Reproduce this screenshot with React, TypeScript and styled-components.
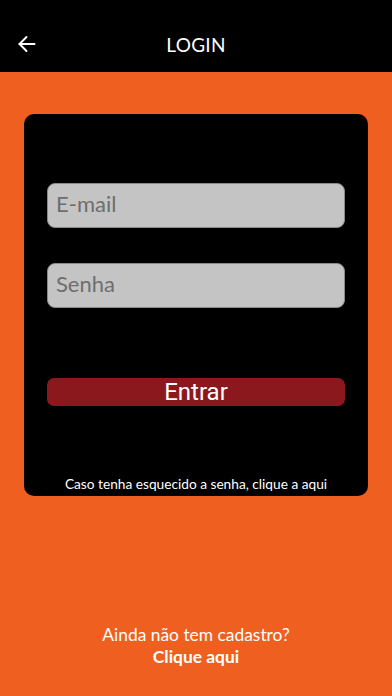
import React from 'react';
import styled, { createGlobalStyle } from 'styled-components';

const GlobalStyle = createGlobalStyle`
  html, body {
    margin: 0;
    padding: 0;
    background: #ef5f1f;
  }
  * {
    box-sizing: border-box;
  }
`;

const Page = styled.div`
  width: 392px;
  height: 696px;
  display: flex;
  flex-direction: column;
  background: #ef5f1f;
  font-family: Lato, 'Noto Sans', sans-serif;
`;

const Header = styled.header`
  height: 72px;
  background: #000;
  display: grid;
  grid-template-columns: 56px 1fr 56px;
  align-items: center;
  padding-top: 16px;
`;

const BackButton = styled.button`
  background: none;
  border: none;
  padding: 0 0 0 17px;
  display: flex;
  align-items: center;
  color: #fff;
  cursor: pointer;
`;

const Title = styled.h1`
  margin: 0;
  text-align: center;
  color: #fff;
  font-size: 19px;
  font-weight: 400;
  letter-spacing: 0.3px;
`;

const Card = styled.div`
  margin: 42px 24px 0;
  height: 382px;
  background: #000;
  border-radius: 10px;
  display: flex;
  flex-direction: column;
  padding: 69px 23px 0;
`;

const Input = styled.input`
  height: 45px;
  width: 100%;
  border: 1px solid #8a8a8a;
  border-radius: 8px;
  background: #c4c4c4;
  padding: 0 8px 5px;
  font-family: Lato, 'Noto Sans', sans-serif;
  font-size: 22px;
  color: #333;
  &::placeholder {
    color: #6e6e6e;
  }
  & + & {
    margin-top: 35px;
  }
`;

const SubmitButton = styled.button`
  margin-top: 70px;
  height: 28px;
  width: 100%;
  border: none;
  border-radius: 7px;
  background: #8b181c;
  color: #fff;
  font-family: Roboto, 'Noto Sans', sans-serif;
  font-size: 24px;
  line-height: 28px;
  padding: 0;
  cursor: pointer;
`;

const ForgotLink = styled.a`
  margin-top: auto;
  margin-bottom: 4px;
  text-align: center;
  color: #fff;
  font-size: 13.7px;
`;

const Footer = styled.div`
  margin-top: auto;
  padding-bottom: 28px;
  display: flex;
  flex-direction: column;
  align-items: center;
  color: #fff;
  font-size: 17.4px;
  line-height: 22px;
`;

const SignupLink = styled.a`
  font-weight: 700;
`;

const BackIcon = () => (
  <svg width="20" height="20" viewBox="0 0 20 20" fill="none" stroke="#fff" strokeWidth="2" strokeLinecap="round" strokeLinejoin="round">
    <path d="M17.5 10H2.5" />
    <path d="M9.5 3L2.5 10l7 7" />
  </svg>
);

const App = () => {
  return (
    <Page>
      <GlobalStyle />
      <Header>
        <BackButton aria-label="Voltar">
          <BackIcon />
        </BackButton>
        <Title>LOGIN</Title>
        <span />
      </Header>
      <Card>
        <Input type="email" placeholder="E-mail" />
        <Input type="password" placeholder="Senha" />
        <SubmitButton>Entrar</SubmitButton>
        <ForgotLink>Caso tenha esquecido a senha, clique a aqui</ForgotLink>
      </Card>
      <Footer>
        <span>Ainda não tem cadastro?</span>
        <SignupLink>Clique aqui</SignupLink>
      </Footer>
    </Page>
  );
};

export default App;
